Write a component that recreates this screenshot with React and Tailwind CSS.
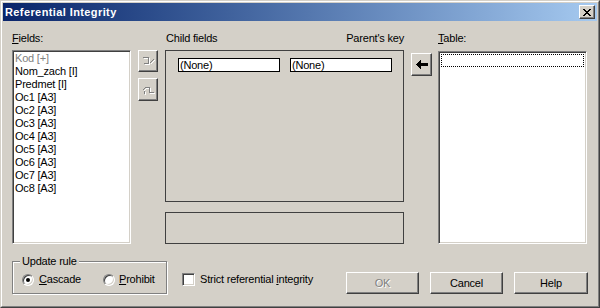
// App.jsx – Referential Integrity dialog (Win2000 look)

const font = "font-['Liberation_Sans',Arial,sans-serif]";

// ==========================
// SHARED BEVELS
// ==========================
const raised =
  "border border-t-white border-l-white border-b-[#404040] border-r-[#404040] shadow-[inset_-1px_-1px_0_#808080] bg-[#D4D0C8]";
const sunken =
  "border border-t-[#808080] border-l-[#808080] border-b-white border-r-white shadow-[inset_1px_1px_0_#404040,inset_-1px_-1px_0_#D4D0C8] bg-white";

const fields = [
  { name: "Kod [+]", disabled: true },
  { name: "Nom_zach [I]" },
  { name: "Predmet [I]" },
  { name: "Oc1 [A3]" },
  { name: "Oc2 [A3]" },
  { name: "Oc3 [A3]" },
  { name: "Oc4 [A3]" },
  { name: "Oc5 [A3]" },
  { name: "Oc6 [A3]" },
  { name: "Oc7 [A3]" },
  { name: "Oc8 [A3]" },
];

// disabled (embossed) glyph: white copy offset by one pixel, gray on top
const Embossed = ({ d }) => (
  <svg width="16" height="16" viewBox="0 0 16 16" fill="none" shapeRendering="crispEdges">
    <path d={d} stroke="#ffffff" strokeWidth="1" transform="translate(1 1)" />
    <path d={d} stroke="#808080" strokeWidth="1" />
  </svg>
);

const Radio = ({ checked }) => (
  <div className="w-[12px] h-[12px] rounded-full border border-t-[#808080] border-l-[#808080] border-b-white border-r-white bg-white shadow-[inset_1px_1px_0_#404040,inset_-1px_-1px_0_#D4D0C8] flex items-center justify-center">
    {checked && <div className="w-[4px] h-[4px] rounded-full bg-black" />}
  </div>
);

const Button = ({ children, disabled, className = "" }) => (
  <div
    className={`${raised} h-[22px] flex items-center justify-center ${className} ${
      disabled ? "text-[#808080] [text-shadow:1px_1px_0_#ffffff]" : "text-black"
    }`}
  >
    {children}
  </div>
);

const App = () => {
  return (
    <div
      className={`${font} text-[11px] tracking-[-0.2px] text-black w-[600px] h-[308px] bg-[#D4D0C8] border border-t-[#D4D0C8] border-l-[#D4D0C8] border-b-[#404040] border-r-[#404040] flex`}
    >
      <div className="flex-1 flex flex-col border border-t-white border-l-white border-b-[#808080] border-r-[#808080] p-px">
        {/* ========================== TITLE BAR ========================== */}
        <div className="h-[18px] bg-linear-to-r from-[#0A246A] to-[#A6CAF0] flex items-center pl-[2px] pr-[2px]">
          <span className="text-white font-bold tracking-[0.4px] leading-none">Referential Integrity</span>
          <div className={`${raised} ml-auto w-[16px] h-[14px] flex items-center justify-center`}>
            <svg width="8" height="7" viewBox="0 0 8 7" shapeRendering="crispEdges">
              <path
                d="M0 0h2v1h1v1h2V1h1V0h2v1H7v1H6v1H5v1h1v1h1v1h1v1H6V6H5V5H3v1H2v1H0V6h1V5h1V4h1V3H2V2H1V1H0z"
                fill="#000"
              />
            </svg>
          </div>
        </div>

        {/* ========================== MAIN ROW ========================== */}
        <div className="flex h-[212px] mt-[11px] pl-[9px]">
          {/* Fields */}
          <div className="w-[119px] flex flex-col">
            <div className="h-[13px] leading-[13px] mb-[5px]">
              <span className="underline">F</span>ields:
            </div>
            <div className={`${sunken} flex-1 p-px pt-[1px]`}>
              {fields.map((f) => (
                <div
                  key={f.name}
                  className={`h-[13px] leading-[13px] pl-[1px] whitespace-nowrap ${
                    f.disabled ? "text-[#808080]" : ""
                  }`}
                >
                  {f.name}
                </div>
              ))}
            </div>
          </div>

          {/* link / unlink buttons */}
          <div className="ml-[7px] w-[20px] pt-[18px] flex flex-col gap-[6px]">
            <div className={`${raised} h-[22px] flex items-center justify-center`}>
              <Embossed d="M2.5 4.5H8.5V10.5H3.5M9.5 10.5L13.5 6.5" />
            </div>
            <div className={`${raised} h-[23px] flex items-center justify-center`}>
              <Embossed d="M2.5 8.5L5.5 5.5H9.5V10.5H13.5M4.5 8.5V11.5" />
            </div>
          </div>

          {/* Child fields / Parent's key */}
          <div className="ml-[7px] w-[239px] flex flex-col">
            <div className="h-[13px] leading-[13px] mb-[5px] flex justify-between pl-px">
              <span>Child fields</span>
              <span>Parent's key</span>
            </div>
            <div className="h-[152px] border border-[#404040] flex gap-[10px] pl-[12px] pt-[7px]">
              <div className="w-[102px] h-[14px] border border-black bg-white leading-[12px] pl-[1px]">(None)</div>
              <div className="w-[102px] h-[14px] border border-black bg-white leading-[12px] pl-[1px]">(None)</div>
            </div>
            <div className="h-[32px] mt-[10px] border border-[#404040]" />
          </div>

          {/* add arrow */}
          <div className="ml-[7px] w-[21px] pt-[21px]">
            <div className={`${raised} h-[23px] flex items-center justify-center`}>
              <svg width="12" height="9" viewBox="0 0 12 9" shapeRendering="crispEdges">
                <path d="M0 4.5L5 0V3H12V6H5V9Z" fill="#000" />
              </svg>
            </div>
          </div>

          {/* Table */}
          <div className="ml-[6px] w-[149px] flex flex-col">
            <div className="h-[13px] leading-[13px] mb-[6px]">
              <span className="underline">T</span>able:
            </div>
            <div className={`${sunken} flex-1 p-[2px]`}>
              <div className="h-[13px] border border-dotted border-black" />
            </div>
          </div>
        </div>

        {/* ========================== BOTTOM ROW ========================== */}
        <div className="flex items-end h-[33px] mt-[17px] pl-[9px] pr-[9px]">
          {/* Update rule */}
          <div className="relative w-[155px] h-[33px] border border-[#808080] shadow-[inset_1px_1px_0_#ffffff,1px_1px_0_#ffffff] flex items-start pl-[9px] pt-[11px]">
            <span className="absolute -top-[7px] left-[7px] px-[2px] bg-[#D4D0C8] leading-[13px]">Update rule</span>
            <div className="w-[81px] flex items-center gap-[5px]">
              <Radio checked />
              <span className="leading-[13px]">
                <span className="underline">C</span>ascade
              </span>
            </div>
            <div className="flex items-center gap-[4px]">
              <Radio />
              <span className="leading-[13px]">
                <span className="underline">P</span>rohibit
              </span>
            </div>
          </div>

          {/* Strict checkbox */}
          <div className="ml-[15px] h-[33px] flex items-center pt-[3px] gap-[5px]">
            <div className="w-[13px] h-[13px] border border-t-[#808080] border-l-[#808080] border-b-white border-r-white bg-white shadow-[inset_1px_1px_0_#404040,inset_-1px_-1px_0_#D4D0C8]" />
            <span className="leading-[13px]">
              Strict referential <span className="underline">i</span>ntegrity
            </span>
          </div>

          {/* buttons */}
          <div className="ml-auto flex gap-[11px]">
            <Button disabled className="w-[73px]">OK</Button>
            <Button className="w-[73px]">Cancel</Button>
            <Button className="w-[74px]">Help</Button>
          </div>
        </div>
      </div>
    </div>
  );
};

export default App;
